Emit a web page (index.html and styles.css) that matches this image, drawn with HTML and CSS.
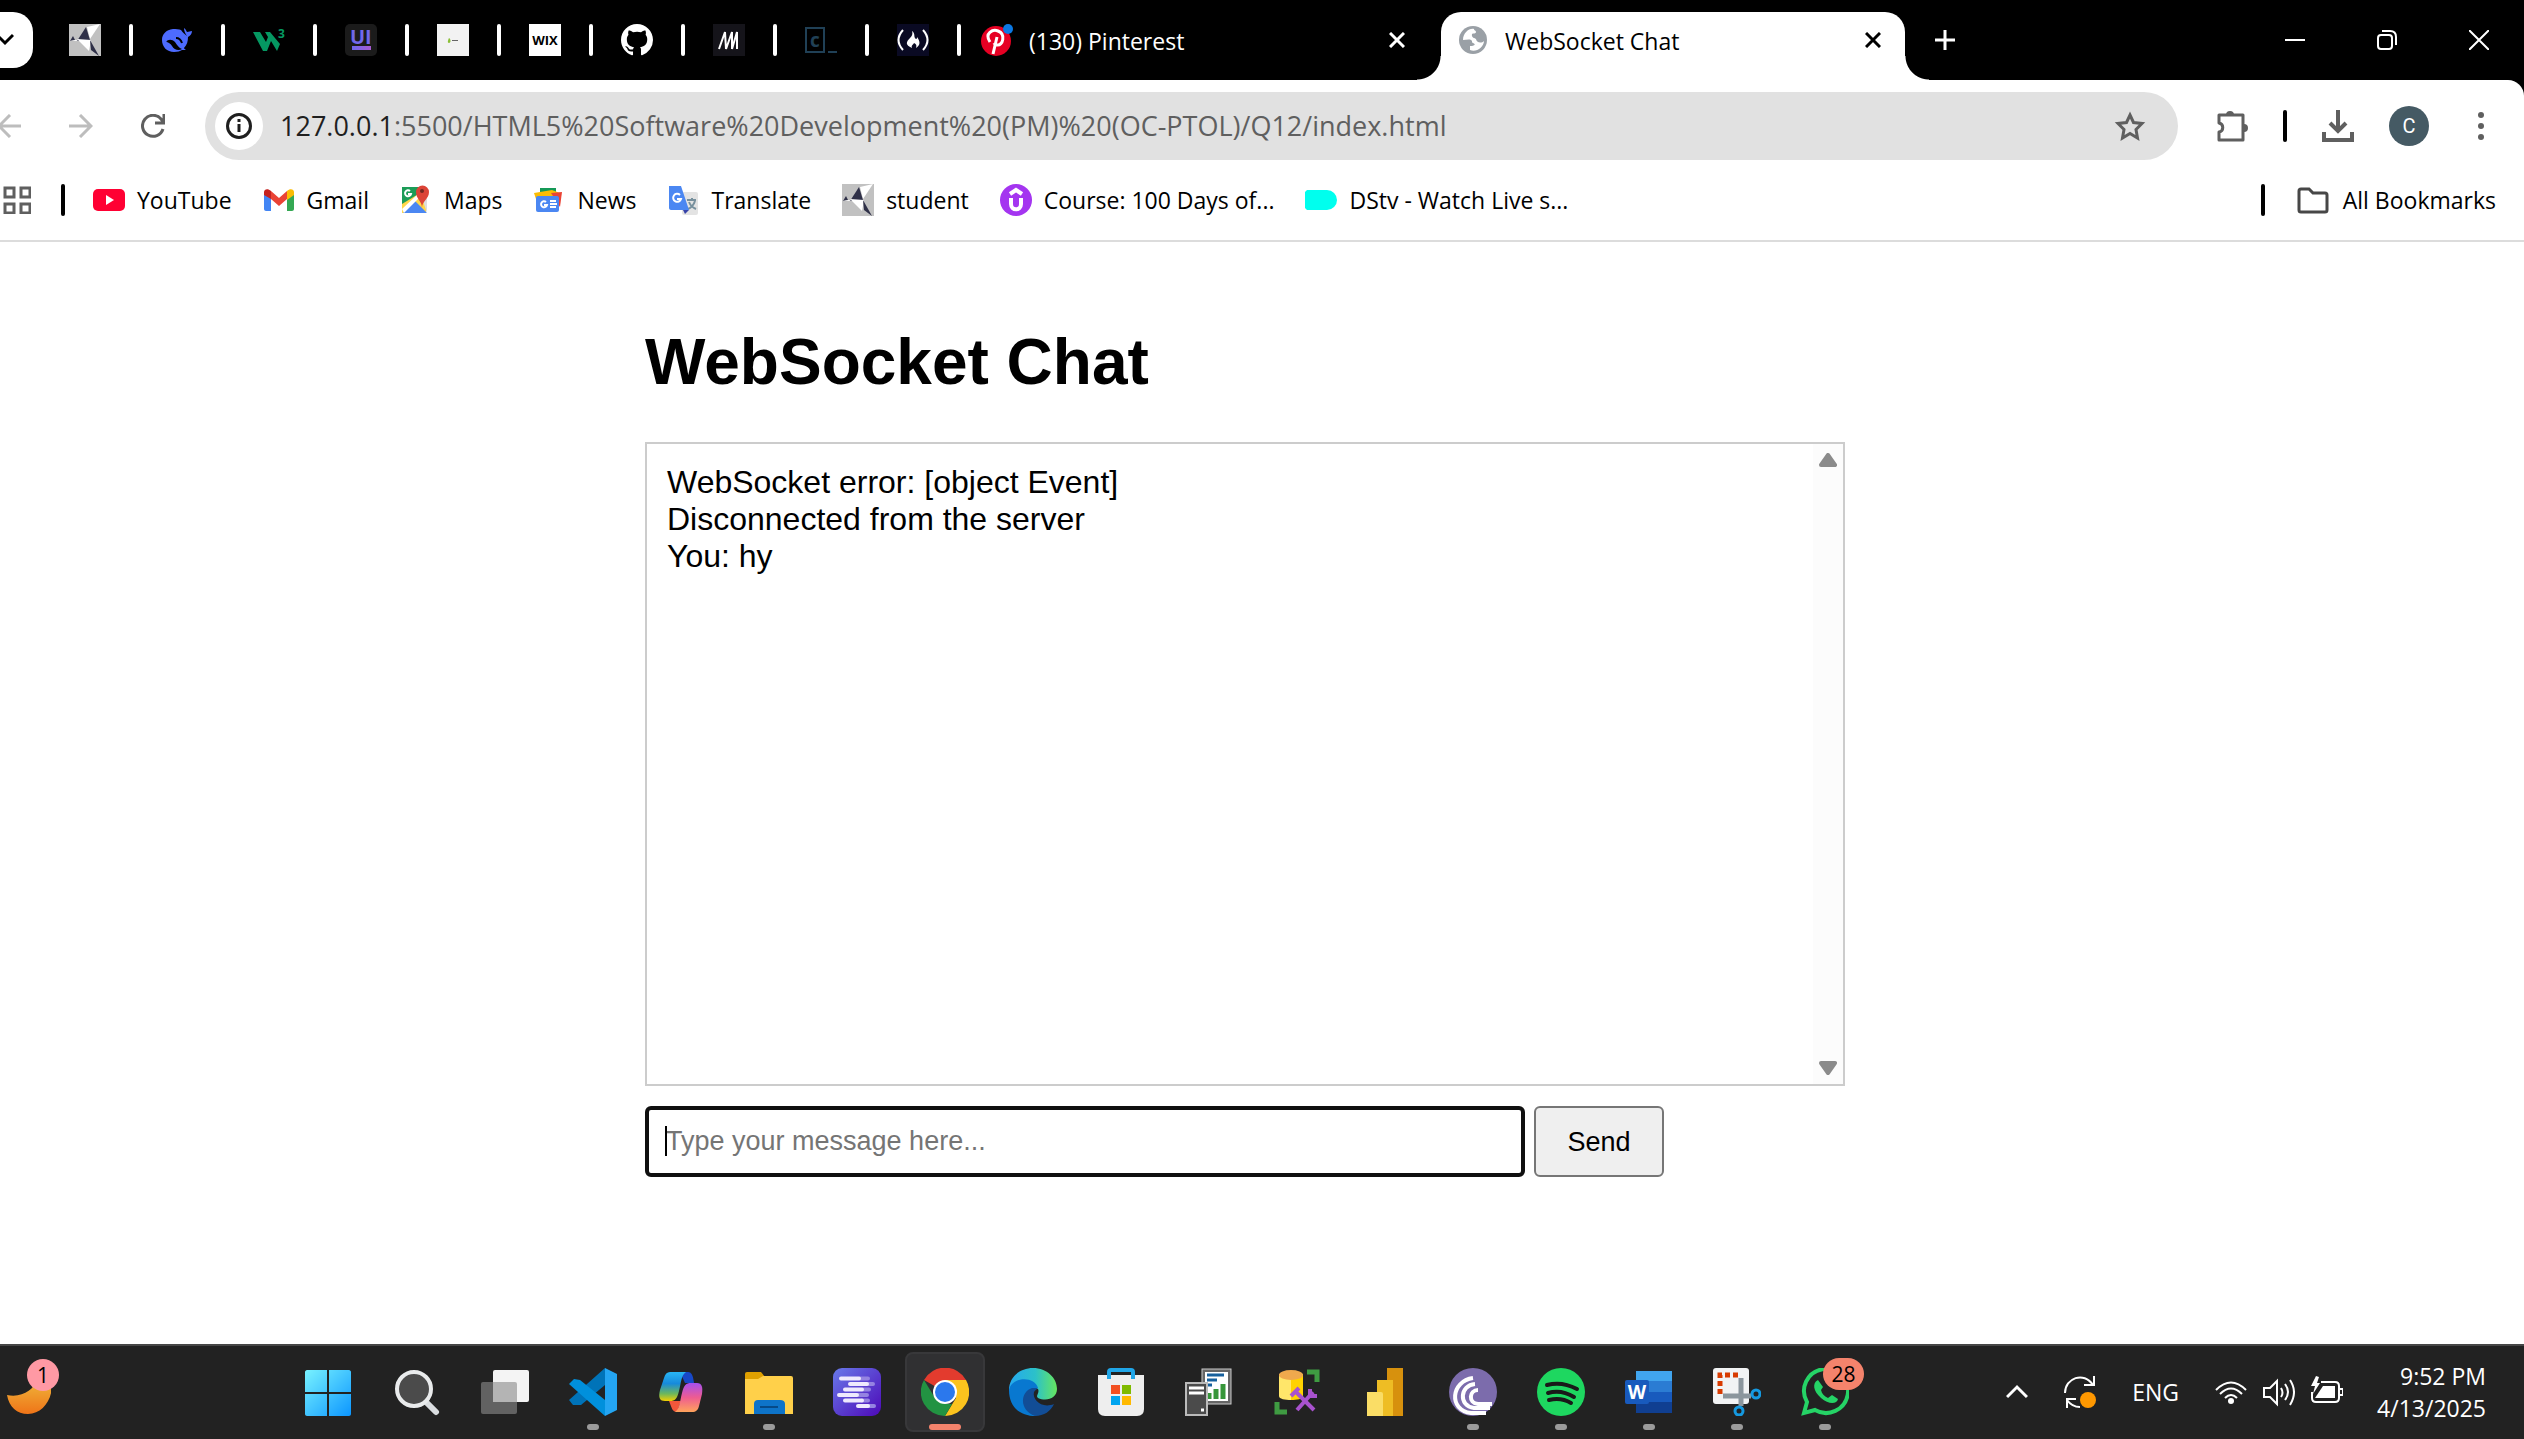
FILE: index.html
```html
<!DOCTYPE html>
<html lang="en">
<head>
<meta charset="utf-8">
<title>WebSocket Chat</title>
<link rel="stylesheet" href="styles.css">
</head>
<body>
<svg class="defs" width="0" height="0" aria-hidden="true">
  <defs>
    <symbol id="student" viewBox="0 0 32 32">
      <rect width="32" height="32" fill="#c1c1c1"/>
      <path d="M31 0 18 3l3 12z" fill="#fff"/>
      <path d="M17 3 8 17l13-1z" fill="#2f3048"/>
      <path d="M8 15 22 16 20 27z" fill="#fff"/>
      <path d="M1 17l3-5 2 4zM21 16l9 16-8-6z" fill="#2f3048"/>
      <path d="M1 17l6-1 2 1z" fill="#fff"/>
    </symbol>
    <symbol id="cross" viewBox="0 0 16 16">
      <path d="M1 1l14 14M15 1L1 15" stroke="currentColor" stroke-width="3" fill="none"/>
    </symbol>
  </defs>
</svg>

<header class="browser">
  <div class="tab-strip">
    <button class="tab-search" aria-label="Search tabs"><svg width="14" height="14" viewBox="0 0 14 14"><path d="M-3 2l8 8 8-8" fill="none" stroke="#000" stroke-width="3"/></svg></button>
    <nav class="pinned" aria-label="Pinned tabs">
      <a class="pin" href="#" aria-label="student"><svg width="32" height="32"><use href="#student"/></svg></a>
      <a class="pin" href="#" aria-label="DeepSeek"><svg width="32" height="32" viewBox="0 0 32 32"><path d="M31 7c-2 0-3 1-5 1-1-1-1-3-3-4 0 3 1 5 3 8-2-2-4-3-6-6-2-1-5-1-8-1C5 6 1 10 1 16c0 7 5 12 12 12 4 0 6-1 8-2h4c-1-1-2-1-2-2 3-3 4-7 4-11 2-1 4-3 4-6z" fill="#4d6bfe"/><path d="M5 18c2-3 6-3 9 0 2 3 4 6 7 7-3 2-8 1-10-3-1-2-4-4-6-4z" fill="#000"/><path d="M15 14c3 0 5 2 6 5" stroke="#000" stroke-width="2" fill="none"/><path d="M4 17c2 5 4 8 8 9" stroke="#4d6bfe" stroke-width="2" fill="none"/></svg></a>
      <a class="pin" href="#" aria-label="W3Schools"><svg width="32" height="32" viewBox="0 0 32 32"><path d="M0 8h7l6 10 2-5-3-5h5l10 12-3 7-6-10-4 10h-4z" fill="#059862"/><text x="25" y="14" class="glyph" font-size="12" fill="#059862">3</text></svg></a>
      <a class="pin" href="#" aria-label="UI"><svg width="32" height="32" viewBox="0 0 32 32"><defs><linearGradient id="ui" x1="0" x2="1"><stop stop-color="#6d68ef"/><stop offset="1" stop-color="#a65bd0"/></linearGradient></defs><rect width="32" height="32" rx="5" fill="#1b1b1b"/><text x="5" y="20" class="glyph" font-size="20" fill="#7168ea">UI</text><rect x="7" y="22" width="19" height="4" fill="url(#ui)"/></svg></a>
      <a class="pin" href="#" aria-label="Blog"><svg width="32" height="32" viewBox="0 0 32 32"><rect width="32" height="32" fill="#f2f2f2"/><path d="M12 14c2 1 2 5 0 5s-1-3 0-5" fill="#8abf35"/><path d="M15 17l1-1 1 1 1-1 1 1 1-1 1 1" fill="none" stroke="#666"/></svg></a>
      <a class="pin" href="#" aria-label="Wix"><span class="wix">WIX</span></a>
      <a class="pin" href="#" aria-label="GitHub"><svg width="32" height="32" viewBox="0 0 16 16"><path fill="#fff" d="M8 0C3.58 0 0 3.58 0 8c0 3.54 2.29 6.53 5.47 7.59.4.07.55-.17.55-.38 0-.19-.01-.82-.01-1.49-2.01.37-2.53-.49-2.69-.94-.09-.23-.48-.94-.82-1.13-.28-.15-.68-.52-.01-.53.63-.01 1.08.58 1.23.82.72 1.21 1.87.87 2.33.66.07-.52.28-.87.51-1.07-1.78-.2-3.64-.89-3.64-3.95 0-.87.31-1.59.82-2.15-.08-.2-.36-1.02.08-2.12 0 0 .67-.21 2.2.82.64-.18 1.32-.27 2-.27s1.36.09 2 .27c1.53-1.04 2.2-.82 2.2-.82.44 1.1.16 1.92.08 2.12.51.56.82 1.27.82 2.15 0 3.07-1.87 3.75-3.65 3.95.29.25.54.73.54 1.48 0 1.07-.01 1.93-.01 2.2 0 .21.15.46.55.38A8.01 8.01 0 0 0 16 8c0-4.42-3.58-8-8-8"/></svg></a>
      <a class="pin" href="#" aria-label="M"><svg width="32" height="32" viewBox="0 0 32 32"><rect width="32" height="32" fill="#15141a"/><path d="M6 25l6-17 1 17 6-17M13 25l6-17v17M19 25l5-17v17" fill="none" stroke="#fff" stroke-width="2"/></svg></a>
      <a class="pin" href="#" aria-label="Codecademy"><svg width="32" height="32" viewBox="0 0 32 32"><path d="M1 4h18v24H1z" fill="none" stroke="#204056" stroke-width="2"/><text x="5" y="23" class="glyph" font-size="19" fill="#204056">c</text><path d="M23 28h9" stroke="#204056" stroke-width="2"/></svg></a>
      <a class="pin" href="#" aria-label="freeCodeCamp"><svg width="32" height="32" viewBox="0 0 32 32"><rect width="32" height="32" fill="#0a0a23"/><path d="M6 6Q-3 16 6 26M26 6q9 10 0 20" fill="none" stroke="#fff" stroke-width="2"/><path d="M15 7c4 3 1 6 4 8 1 0 1-1 1-2 3 4 4 8-1 11 1-3 0-4-2-5-1 2-3 2-2 5-7-3-6-6-2-10 2-2 3-4 2-7z" fill="#fff"/></svg></a>
    </nav>
    <div class="tab">
      <svg width="32" height="32" viewBox="0 0 32 32"><circle cx="15" cy="17" r="15" fill="#e60023"/><path d="M9 18c-6-9 3-13 8-11 8 3 5 15-1 14-2 0-3-2-3-2M16 13l-4 17" fill="none" stroke="#fff" stroke-width="3"/><circle cx="27" cy="5" r="5" fill="#0b78e3"/></svg>
      <span class="tab-title">(130) Pinterest</span>
      <button class="icon-btn" aria-label="Close Pinterest"><svg width="16" height="16"><use href="#cross"/></svg></button>
    </div>
    <div class="tab active">
      <svg width="28" height="28" viewBox="0 0 28 28"><circle cx="14" cy="14" r="14" fill="#9aa0a6"/><path d="M15 3c-5-1-11 4-11 11 3 0 6-1 8 0s0 2 2 3c3 1 2 3-3 3v4c6 3 14-3 14-9-3 3-8 1-8-2-1-1-5-1-4-5 1-1 4 0 4-2s-2-1-2-3z" fill="#fff"/></svg>
      <span class="tab-title">WebSocket Chat</span>
      <button class="icon-btn" aria-label="Close WebSocket Chat"><svg width="16" height="16"><use href="#cross"/></svg></button>
    </div>
    <button class="icon-btn new-tab" aria-label="New tab"><svg width="20" height="20" viewBox="0 0 20 20"><path d="M10 0v20M0 10h20" stroke="#fff" stroke-width="3"/></svg></button>
    <div class="window-controls">
      <button class="icon-btn" aria-label="Minimise"><svg width="20" height="20" viewBox="0 0 20 20"><path d="M0 10h20" stroke="#fff" stroke-width="2"/></svg></button>
      <button class="icon-btn" aria-label="Restore"><svg width="20" height="20" viewBox="0 0 20 20" fill="none" stroke="#fff" stroke-width="2"><rect x="1" y="5" width="14" height="14" rx="3"/><path d="M5 1h8c4 0 6 2 6 6v8"/></svg></button>
      <button class="icon-btn" aria-label="Close window"><svg width="20" height="20" viewBox="0 0 20 20"><path d="M0 0l20 20M20 0L0 20" stroke="#fff" stroke-width="2"/></svg></button>
    </div>
  </div>

  <div class="toolbar">
    <div class="nav-buttons">
      <button class="icon-btn" aria-label="Back"><svg width="21" height="24" viewBox="3 0 21 24"><path d="M24 12H2M13 1L2 12l11 11" fill="none" stroke="#bdbdbd" stroke-width="3"/></svg></button>
      <button class="icon-btn" aria-label="Forward"><svg width="24" height="24" viewBox="0 0 24 24"><path d="M0 12h22M11 1l11 11-11 11" fill="none" stroke="#bdbdbd" stroke-width="3"/></svg></button>
      <button class="icon-btn" aria-label="Reload"><svg width="24" height="24" viewBox="0 0 24 24"><path d="M22 15A10.500 10.500 0 1 1 20 5l2 3M23 0v9h-9" fill="none" stroke="#5f5f5f" stroke-width="3"/></svg></button>
    </div>
    <div class="omnibox">
      <button class="icon-btn site-info" aria-label="Site information"><svg width="26" height="26" viewBox="0 0 26 26"><circle cx="13" cy="13" r="11.500" fill="none" stroke="#1f1f1f" stroke-width="3"/><path d="M13 11v8M13 6v3" stroke="#1f1f1f" stroke-width="3"/></svg></button>
      <label for="url">127.0.0.1</label><input id="url" type="text" value=":5500/HTML5%20Software%20Development%20(PM)%20(OC-PTOL)/Q12/index.html">
      <button class="icon-btn" aria-label="Bookmark this page"><svg width="32" height="32" viewBox="0 0 32 32"><path d="M16 5l3.500 7.500 8.500 1-6 6 1.500 8.500-7.500-4.500L8.500 28l1.500-8.500-6-6 8.500-1z" fill="none" stroke="#5f5f5f" stroke-width="3"/></svg></button>
    </div>
    <div class="tools">
      <button class="icon-btn" aria-label="Extensions"><svg width="32" height="32" viewBox="0 0 32 32"><path d="M3 5h24v25H3v-8c5-1 5-8 0-9z" fill="none" stroke="#5f5f5f" stroke-width="3" stroke-linejoin="round"/><path d="M10 5a4 4 0 0 1 8 0zM28 14a4 4 0 0 1 0 8z" fill="#5f5f5f"/></svg></button>
      <span class="bar"></span>
      <button class="icon-btn" aria-label="Downloads"><svg width="32" height="32" viewBox="0 0 32 32"><path d="M16 0v21M8 13l8 8 8-8M2 22v8h28v-8" fill="none" stroke="#5f5f5f" stroke-width="4"/></svg></button>
      <button class="avatar" aria-label="Profile">C</button>
      <button class="icon-btn menu" aria-label="Menu"><svg width="6" height="28" viewBox="0 0 6 28" fill="#5f5f5f"><circle cx="3" cy="3" r="3"/><circle cx="3" cy="14" r="3"/><circle cx="3" cy="25" r="3"/></svg></button>
    </div>
  </div>

  <nav class="bookmarks" aria-label="Bookmarks">
    <button class="icon-btn" aria-label="Apps"><svg width="28" height="28" viewBox="0 0 28 28"><path d="M2 2h9v9H2zM18 2h9v9h-9zM2 18h9v9H2zM18 18h9v9h-9z" fill="none" stroke="#5f5f5f" stroke-width="3"/></svg></button>
    <span class="bar"></span>
    <div class="bookmark-list">
      <a class="bookmark" href="#"><svg width="32" height="32" viewBox="0 0 32 32"><rect y="5" width="32" height="22" rx="5" fill="#ff0033"/><path d="M13 11l8 5-8 5z" fill="#fff"/></svg>YouTube</a>
      <a class="bookmark" href="#"><svg width="32" height="32" viewBox="0 0 32 32"><path d="M1 9l7 5v13H3c-1 0-2-1-2-2z" fill="#4285f4"/><path d="M24 14l7-5v16c0 1-1 2-2 2h-5z" fill="#34a853"/><path d="M8 7l8 7 8-7v8l-8 7-8-7z" fill="#ea4335"/><path d="M1 11V8c0-3 4-4 7-1v8z" fill="#c5221f"/><path d="M24 7c3-3 7-2 7 1v3l-7 5z" fill="#fbbc04"/></svg>Gmail</a>
      <a class="bookmark" href="#"><svg width="32" height="32" viewBox="0 0 32 32"><rect x="2" y="3" width="24" height="26" fill="#1c9c57"/><path d="M2 20L20 9l6 6v14H2z" fill="#ffd64a"/><path d="M3 29l12-12 12 12z" fill="#4b87f2"/><path d="M2 25l16-15 3 2L4 29z" fill="#fff"/><path d="M22 14l5 15V12z" fill="#ddd"/><path d="M22 24c0-7-6-9-6-16a6 6 0 0 1 13 0c0 7-7 9-7 16z" fill="#dc4437"/><circle cx="22" cy="7" r="2" fill="#742820"/><path d="M10 7a3 3 0 1 0 1 3H8" fill="none" stroke="#fff" stroke-width="2"/></svg>Maps</a>
      <a class="bookmark" href="#"><svg width="32" height="32" viewBox="0 0 32 32"><path d="M7 4h16v8H7z" fill="#159957"/><path d="M1 9l18-3 8 3-2 6H3z" fill="#fbbc04"/><path d="M18 9l11-1-2 15z" fill="#ea4335"/><rect x="3" y="12" width="23" height="16" rx="2" fill="#4b87f2"/><path d="M13 18a3 3 0 1 0 1 3h-3M17 17h6M17 20h7M17 23h6" fill="none" stroke="#fff" stroke-width="2"/></svg>News</a>
      <a class="bookmark" href="#"><svg width="32" height="32" viewBox="0 0 32 32"><rect x="14" y="8" width="16" height="23" rx="2" fill="#e3e3e3"/><path d="M19 16h9M24 14v2M27 17q-2 6-7 8M21 18q2 5 7 7" stroke="#77909d" stroke-width="2" fill="none"/><path d="M1 2h12l8 24H3c-1 0-2-1-2-2z" fill="#4b87f2"/><path d="M15 26h6l-4 4z" fill="#3642a8"/><path d="M12 11a4 4 0 1 0 1 4H9" stroke="#fff" stroke-width="2" fill="none"/></svg>Translate</a>
      <a class="bookmark" href="#"><svg width="32" height="32"><use href="#student"/></svg>student</a>
      <a class="bookmark" href="#"><svg width="32" height="32" viewBox="0 0 32 32"><circle cx="16" cy="16" r="16" fill="#a435f0"/><path d="M10 10l6-4 6 4M11 14v6c0 7 10 7 10 0v-6" fill="none" stroke="#fff" stroke-width="4"/></svg>Course: 100 Days of...</a>
      <a class="bookmark" href="#"><svg width="32" height="32" viewBox="0 0 32 32"><path d="M2 6h20a10 10 0 0 1 0 20H2l-2-2V8z" fill="#00ffee"/></svg>DStv - Watch Live s...</a>
    </div>
    <span class="bar"></span>
    <a class="bookmark all" href="#"><svg width="32" height="32" viewBox="0 0 32 32"><path d="M2 26V7c0-1 0-2 2-2h8l4 4h12c2 0 2 1 2 2v15c0 1 0 2-2 2H4c-2 0-2-1-2-2z" fill="none" stroke="#474747" stroke-width="3"/></svg>All Bookmarks</a>
  </nav>
</header>

<main class="page">
  <div class="chat">
    <h1>WebSocket Chat</h1>
    <div class="log">
      <div class="messages">
        <div>WebSocket error: [object Event]</div>
        <div>Disconnected from the server</div>
        <div>You: hy</div>
      </div>
      <div class="scrollbar">
        <svg width="18" height="14" viewBox="0 0 18 14"><path d="M2 12L9 2l7 10z" fill="#8b8b8b" stroke="#8b8b8b" stroke-width="4" stroke-linejoin="round"/></svg>
        <svg width="18" height="14" viewBox="0 0 18 14"><path d="M2 2l7 10 7-10z" fill="#8b8b8b" stroke="#8b8b8b" stroke-width="4" stroke-linejoin="round"/></svg>
      </div>
    </div>
    <form class="composer">
      <div class="field"><input type="text" aria-label="Message" placeholder="Type your message here..."><span class="caret"></span></div>
      <button class="send" type="button">Send</button>
    </form>
  </div>
</main>

<footer class="taskbar">
  <button class="weather" aria-label="Weather"><svg width="44" height="36" viewBox="0 0 44 36"><defs><linearGradient id="moon" x2="0" y2="1"><stop stop-color="#efb83c"/><stop offset="1" stop-color="#ef7418"/></linearGradient></defs><path d="M0 16C15 19 27 11 30 0h14c4 17-7 35-23 35C10 35 2 28 0 16z" fill="url(#moon)"/></svg><span class="badge pink">1</span></button>
  <div class="apps">
    <button class="app" aria-label="Start"><svg width="48" height="48" viewBox="0 0 48 48"><defs><linearGradient id="win" x1="0" y1="0" x2="1" y2="1" gradientUnits="objectBoundingBox"><stop stop-color="#78f2ff"/><stop offset="1" stop-color="#0c96ff"/></linearGradient></defs><path d="M2 2h20v22H0V4c0-1 1-2 2-2zM24 2h20c1 0 2 1 2 2v20H24zM0 26h22v22H2c-1 0-2-1-2-2zM24 26h22v20c0 1-1 2-2 2H24z" fill="url(#win)"/></svg></button>
    <button class="app" aria-label="Search"><svg width="48" height="48" viewBox="0 0 48 48"><path d="M32 33l11 11" stroke="#dadde0" stroke-width="6" stroke-linecap="round"/><circle cx="21" cy="21" r="17" fill="#4b4b4b" stroke="#e9ebec" stroke-width="4"/></svg></button>
    <button class="app" aria-label="Task view"><svg width="48" height="48" viewBox="0 0 48 48"><rect y="14" width="36" height="32" rx="2" fill="#626262"/><rect x="12" y="2" width="36" height="32" rx="2" fill="#f4f4f4"/><path d="M12 14h22q2 0 2 2v18H12z" fill="#b4b4b4"/></svg></button>
    <button class="app running" aria-label="Visual Studio Code"><svg width="48" height="48" viewBox="0 0 48 48"><path d="M36 0L0 32l4 5 8 0L36 17z" fill="#0073b8"/><path d="M36 48L0 16l5-5 6 1 25 20z" fill="#0090dc"/><path d="M36 0l12 6v36l-12 6z" fill="#24a5f2"/></svg></button>
    <button class="app" aria-label="Copilot"><svg width="48" height="48" viewBox="0 0 48 48"><defs><linearGradient id="cpa" x2="0" y2="1"><stop stop-color="#28b6f5"/><stop offset=".4" stop-color="#178adb"/><stop offset=".75" stop-color="#6db75c"/><stop offset="1" stop-color="#f3cf00"/></linearGradient><linearGradient id="cpb" x2="0" y2="1"><stop stop-color="#a650ef"/><stop offset=".5" stop-color="#ee5c91"/><stop offset="1" stop-color="#ffa35b"/></linearGradient></defs><path d="M23 4h8c4 0 5 4 6 11h-9z" fill="#1748c8"/><path d="M12 33h12l-4 11c-5 0-5-4-8-11z" fill="#f1573b"/><path d="M13 4h16c-5 3-5 12-7 19-2 8-4 10-9 10H8c-5 0-7-3-5-11l4-12c1-4 3-6 6-6z" fill="url(#cpa)"/><path d="M35 44H18c5-3 5-12 7-19 2-8 4-10 9-10h6c5 0 6 4 5 11l-3 12c-1 4-3 6-7 6z" fill="url(#cpb)"/></svg></button>
    <button class="app running" aria-label="File Explorer"><svg width="48" height="48" viewBox="0 0 48 48"><path d="M2 4h14l4 5v8H0V6q0-2 2-2z" fill="#dfa000"/><path d="M0 11h13l5-3h28q2 0 2 2v36H0z" fill="#ffd04a"/><path d="M9 46V36q0-4 4-4h22q5 0 5 4v10z" fill="#0e74c9"/><path d="M15 39h18" stroke="#064a88" stroke-width="2"/></svg></button>
    <button class="app" aria-label="Text tool"><svg width="48" height="48" viewBox="0 0 48 48"><defs><linearGradient id="txt" x2="1" y2="1"><stop stop-color="#6879e9"/><stop offset="1" stop-color="#4d09b8"/></linearGradient></defs><rect width="48" height="48" rx="9" fill="url(#txt)"/><path d="M27 10.500h8M35 16h5M30 21.500h6M25 27h9M29 32.500h6M35 38h6" stroke="#9583e1" stroke-width="4" stroke-linecap="round"/><path d="M8 10.500h18M17 16h17M12 21.500h17M6 27h18M12 32.500h17M25 38h10" stroke="#eeeafd" stroke-width="4" stroke-linecap="round"/></svg></button>
    <button class="app current" aria-label="Google Chrome"><svg width="48" height="48" viewBox="0 0 48 48"><path d="M24 24L3 12a24 24 0 0 1 42 0z" fill="#e33b2e"/><path d="M24 12h21a24 24 0 0 1-21 36l11-18z" fill="#fcc31e"/><path d="M24 48A24 24 0 0 1 3 12l11 18 10 6h7z" fill="#229342"/><circle cx="24" cy="24" r="12" fill="#fff"/><circle cx="24" cy="24" r="10" fill="#2b78ed"/></svg></button>
    <button class="app" aria-label="Microsoft Edge"><svg width="48" height="48" viewBox="0 0 48 48"><defs><linearGradient id="ed" x2="1" y2="0"><stop stop-color="#25a8ef"/><stop offset=".55" stop-color="#2cc1c9"/><stop offset="1" stop-color="#66e65f"/></linearGradient></defs><path d="M0 22C0 9 11 0 24 0c14 0 24 10 24 21 0 9-10 13-19 9-3-2 2-5 0-9z" fill="url(#ed)"/><path d="M0 22c3-14 26-14 29-2-8 0-8 17 3 18l-5 10C11 48 0 39 0 22z" fill="#0878d0"/><path d="M23 20c-12 4-13 22 3 28 9 0 16-5 19-12-12 5-22-4-20-12 1-2 3-3 4-4z" fill="#124d96"/></svg></button>
    <button class="app" aria-label="Microsoft Store"><svg width="48" height="48" viewBox="0 0 48 48"><path d="M1 7h46v34q0 7-7 7H8q-7 0-7-7z" fill="#eee"/><path d="M12 11V4q0-2 2-2h20q2 0 2 2v7" fill="none" stroke="#20a6e8" stroke-width="4"/><path d="M14 17h9v9h-9z" fill="#f25022"/><path d="M25 17h9v9h-9z" fill="#7fba00"/><path d="M14 28h9v9h-9z" fill="#00a4ef"/><path d="M25 28h9v9h-9z" fill="#ffb900"/></svg></button>
    <button class="app" aria-label="Report server"><svg width="48" height="48" viewBox="0 0 48 48"><rect x="17" y="1" width="29" height="35" fill="#666" stroke="#ccc"/><path d="M20 4h23v29H20z" fill="#fff"/><path d="M22 7h17M22 12h10M22 17h5" stroke="#17609d" stroke-width="3"/><path d="M24 25v6M31 21v10M38 16v15" stroke="#37963a" stroke-width="5"/><rect x="1" y="15" width="21" height="32" fill="#4b4b4b" stroke="#bbb" stroke-width="2"/><path d="M4 20h15M4 25h15M16 42h3" stroke="#fff" stroke-width="3"/></svg></button>
    <button class="app" aria-label="Database tools"><svg width="48" height="48" viewBox="0 0 48 48"><path d="M6 6h12v26c-6 0-12-1-12-4z" fill="#ffe66a"/><path d="M18 6h12v22c0 3-6 4-12 4z" fill="#ffd200"/><ellipse cx="18" cy="7" rx="12" ry="5" fill="#efa94d"/><path d="M34 4h10v10M4 34v10h10" fill="none" stroke="#3f9b42" stroke-width="5"/><path d="M23 24l18 18M40 24L24 42" stroke="#a852ce" stroke-width="4"/><path d="M18 28l8-8M37 21v7h7" stroke="#a852ce" stroke-width="4" fill="none"/></svg></button>
    <button class="app" aria-label="Power BI"><svg width="48" height="48" viewBox="0 0 48 48"><path d="M26 0h16v48H26z" fill="#d7910d"/><path d="M16 12h16v36H16z" fill="#eebd24"/><path d="M6 24h14q2 0 2 2v22H6z" fill="#fadd66"/></svg></button>
    <button class="app running" aria-label="BitTorrent"><svg width="48" height="48" viewBox="0 0 48 48"><circle cx="24" cy="24" r="24" fill="#7c6cac"/><path d="M24 10C2 13-1 42 22 45h15M26 16c-15 1-17 22-1 24h16M29 22c-9 0-10 13 0 14h14" fill="none" stroke="#fff" stroke-width="4"/></svg></button>
    <button class="app running" aria-label="Spotify"><svg width="48" height="48" viewBox="0 0 48 48"><circle cx="24" cy="24" r="24" fill="#1ed760"/><path d="M10 17q15-4 30 4M11 25q13-4 26 4M12 32q12-3 22 3" fill="none" stroke="#191919" stroke-width="4" stroke-linecap="round"/></svg></button>
    <button class="app running" aria-label="Word"><svg width="48" height="48" viewBox="0 0 48 48"><rect x="11" y="3" width="36" height="11" fill="#41a5ee"/><path d="M11 13h36v11H11z" fill="#2b7cd3"/><path d="M11 24h36v11H11z" fill="#185abd"/><path d="M11 34h36v11H11z" fill="#103f91"/><rect y="12" width="24" height="24" rx="2" fill="#185abd"/><text x="12" y="31" class="glyph" font-size="19" text-anchor="middle" fill="#fff">W</text></svg></button>
    <button class="app running" aria-label="Snipping Tool"><svg width="48" height="48" viewBox="0 0 48 48"><rect width="36" height="36" rx="3" fill="#f1f3f4"/><path d="M7 26V7h19" fill="none" stroke="#d83b01" stroke-width="5" stroke-dasharray="5 3"/><path d="M28 10v28M10 28h28" stroke="#8b969d" stroke-width="5"/><circle cx="43" cy="26" r="4" fill="none" stroke="#1599e0" stroke-width="3"/><circle cx="26" cy="43" r="4" fill="none" stroke="#1599e0" stroke-width="3"/></svg></button>
    <button class="app running" aria-label="WhatsApp"><svg width="48" height="48" viewBox="0 0 48 48"><path d="M3 45l3-11a22 22 0 1 1 8 8z" fill="none" stroke="#25d366" stroke-width="4"/><path d="M17 12c-6 3-5 11 3 18s16 6 17 1l-6-4-4 3c-4-2-6-4-7-8l2-3z" fill="#25d366"/></svg><span class="badge coral">28</span></button>
  </div>
  <div class="tray">
    <button class="icon-btn" aria-label="Hidden icons"><svg width="22" height="22" viewBox="0 0 22 22"><path d="M1 16L11 6l10 10" fill="none" stroke="#fff" stroke-width="3"/></svg></button>
    <button class="icon-btn sync" aria-label="Updates"><svg width="32" height="32" viewBox="0 0 32 32"><path d="M1 17C1 2 20-5 29 9M30 0v9H20M3 32v-9h9M3 24q5 7 13 7" fill="none" stroke="#fff" stroke-width="2"/><circle cx="24" cy="24" r="8" fill="#ff9800"/></svg></button>
    <button class="lang">ENG</button>
    <div class="status">
      <svg width="32" height="32" viewBox="0 0 32 32"><path d="M1 14q15-15 30 0M5 18q11-11 22 0M10 22q6-6 12 0" fill="none" stroke="#fff" stroke-width="2"/><circle cx="16" cy="25" r="3" fill="#fff"/></svg>
      <svg width="32" height="32" viewBox="0 0 32 32"><path d="M1 12h6l7-7v23l-7-7H1zM18 12q3 5 0 9M22 8q6 8 0 16M27 4q8 12 0 25" fill="none" stroke="#fff" stroke-width="2"/></svg>
      <svg width="32" height="32" viewBox="0 0 32 32"><path d="M10 6h14q4 0 4 4v12q0 4-4 4H5q-4 0-4-4v-6M29 13h3v6h-3" fill="none" stroke="#fff" stroke-width="2"/><path d="M12 10h12v12H4z" fill="#fff"/><path d="M5 0L0 10h4L2 18l7-11H6l2-6z" fill="#fff"/></svg>
    </div>
    <div class="clock"><span>9:52 PM</span><span>4/13/2025</span></div>
  </div>
</footer>
</body>
</html>
```
FILE: styles.css
```css
* { box-sizing: border-box; }

body {
  margin: 0;
  min-height: 100vh;
  display: flex;
  flex-direction: column;
  background: #fff;
  color: #000;
  font-family: "Open Sans", "Noto Sans", sans-serif;
  font-size: 23px;
  line-height: 32px;
}

button { margin: 0; padding: 0; border: 0; background: none; font: inherit; color: inherit; }
a { color: inherit; text-decoration: none; }
svg { display: block; flex: none; }
.defs { position: absolute; }
.icon-btn { flex: none; display: flex; }
.glyph { font-family: "Open Sans", sans-serif; font-weight: 700; }

/* tab strip */
.browser { background: #000; }
.tab-strip { display: flex; align-items: center; height: 80px; color: #fff; }
.tab-search {
  flex: none;
  width: 33px;
  height: 56px;
  border-radius: 0 20px 20px 0;
  background: #fff;
}
.pinned { display: flex; flex: none; margin-left: 8px; }
.pin {
  display: flex;
  width: 92px;
  padding-left: 28px;
  justify-content: space-between;
}
.pin::after { content: ""; width: 4px; height: 32px; border-radius: 2px; background: #fff; }
.wix {
  width: 32px;
  height: 32px;
  background: #fff;
  color: #000;
  font-size: 13px;
  font-weight: 700;
  text-align: center;
}
.tab {
  flex: 0 1 480px;
  display: flex;
  align-items: center;
  gap: 16px;
  padding: 0 36px 0 20px;
}
.tab-title { flex: 1; white-space: nowrap; overflow: hidden; padding-top: 2px; }
.tab.active {
  flex-basis: 464px;
  position: relative;
  align-self: flex-end;
  height: 68px;
  gap: 18px;
  padding: 0 24px 12px 18px;
  border-radius: 20px 20px 0 0;
  background: #fff;
  color: #000;
}
.tab.active::before,
.tab.active::after {
  content: "";
  position: absolute;
  bottom: 0;
  width: 24px;
  height: 24px;
}
.tab.active::before { right: 100%; background: radial-gradient(circle at 0 0, transparent 23px, #fff 24px); }
.tab.active::after { left: 100%; background: radial-gradient(circle at 100% 0, transparent 23px, #fff 24px); }
.new-tab { margin-left: 30px; }
.window-controls { display: flex; gap: 72px; margin-left: auto; padding-right: 35px; }

/* address bar */
.toolbar {
  display: flex;
  align-items: center;
  padding-top: 12px;
  border-radius: 0 16px 0 0;
  background: #fff;
}
.nav-buttons { display: flex; gap: 48px; padding-right: 40px; }
.omnibox {
  flex: 1;
  display: flex;
  align-items: center;
  height: 68px;
  padding: 0 32px 0 10px;
  border-radius: 34px;
  background: #e1e1e1;
  font-size: 27px;
}
.site-info {
  width: 48px;
  height: 48px;
  margin-right: 17px;
  align-items: center;
  justify-content: center;
  border-radius: 50%;
  background: #fff;
}
.omnibox label { color: #1f1f1f; }
.omnibox input {
  flex: 1;
  min-width: 0;
  padding: 0;
  border: 0;
  background: none;
  color: #5f5f5f;
  font: inherit;
}
.tools { display: flex; align-items: center; gap: 35px; padding: 0 40px 0 38px; }
.bar { flex: none; width: 4px; height: 32px; border-radius: 2px; background: #000; }
.avatar {
  width: 40px;
  height: 40px;
  border-radius: 50%;
  background: #455a64;
  color: #fff;
  font-family: Roboto, sans-serif;
  font-size: 20px;
}
.menu { margin-left: 14px; }

/* bookmarks */
.bookmarks {
  display: flex;
  align-items: center;
  height: 82px;
  padding: 0 28px 0 3px;
  border-bottom: 2px solid #dcdcdc;
  background: #fff;
}
.bookmarks > .icon-btn { margin-right: 30px; }
.bookmark-list { flex: 1; display: flex; gap: 31px; padding-left: 28px; overflow: hidden; }
.bookmark { display: flex; align-items: center; gap: 12px; white-space: nowrap; }
.bookmark.all { gap: 14px; padding-left: 32px; }

/* chat page */
.page {
  flex: 1;
  padding: 40px 74px 40px 40px;
  font-family: "Liberation Sans", Arial, sans-serif;
}
.chat { max-width: 1200px; margin: 0 auto; }
h1 { margin: 43px 0; font-size: 64px; line-height: 74px; }
.log {
  display: flex;
  height: 644px;
  margin-bottom: 20px;
  border: 2px solid #ccc;
}
.messages { flex: 1; padding: 20px; font-size: 32px; line-height: 37px; }
.scrollbar {
  width: 30px;
  display: flex;
  flex-direction: column;
  align-items: center;
  justify-content: space-between;
  padding: 9px 0;
  background: #fcfcfc;
}
.composer { display: flex; gap: 9px; }
.field { position: relative; width: 880px; }
.field input {
  width: 100%;
  height: 71px;
  padding: 0 17px;
  border: 4px solid #101010;
  border-radius: 6px;
  background: #fff;
  font: 27px "Liberation Sans", Arial, sans-serif;
}
.field input::placeholder { color: #757575; }
.caret { position: absolute; left: 20px; top: 20px; width: 2px; height: 30px; background: #000; }
.send {
  width: 130px;
  border: 2px solid #767676;
  border-radius: 6px;
  background: #efefef;
  font-size: 27px;
}

/* taskbar */
.taskbar {
  display: flex;
  align-items: center;
  height: 95px;
  padding-bottom: 2px;
  border-top: 2px solid #464646;
  background: #222;
  color: #fff;
}
.weather { position: relative; width: 285px; padding: 10px 0 0 7px; }
.badge {
  position: absolute;
  height: 32px;
  border-radius: 16px;
  color: #000;
  font-size: 21px;
  text-align: center;
}
.badge.pink { left: 27px; top: -10px; width: 32px; background: #ff99a4; }
.badge.coral { left: 38px; top: 6px; width: 41px; background: #f4836c; }
.apps { display: flex; gap: 8px; padding-left: 4px; }
.app {
  position: relative;
  display: flex;
  align-items: center;
  justify-content: center;
  width: 80px;
  height: 80px;
  border-radius: 8px;
}
.app.current { background: #303032; border: 2px solid #38383a; }
.app.running::after,
.app.current::after {
  content: "";
  position: absolute;
  bottom: 2px;
  width: 12px;
  height: 6px;
  border-radius: 3px;
  background: #9b9b9b;
}
.app.current::after { bottom: 0; width: 32px; background: #f4836c; }
.tray { display: flex; align-items: center; margin-left: auto; padding-right: 38px; }
.sync { margin: 0 36px; }
.lang { margin-right: 36px; }
.status { display: flex; gap: 16px; margin-right: 34px; }
.clock { display: flex; flex-direction: column; align-items: flex-end; }
```
